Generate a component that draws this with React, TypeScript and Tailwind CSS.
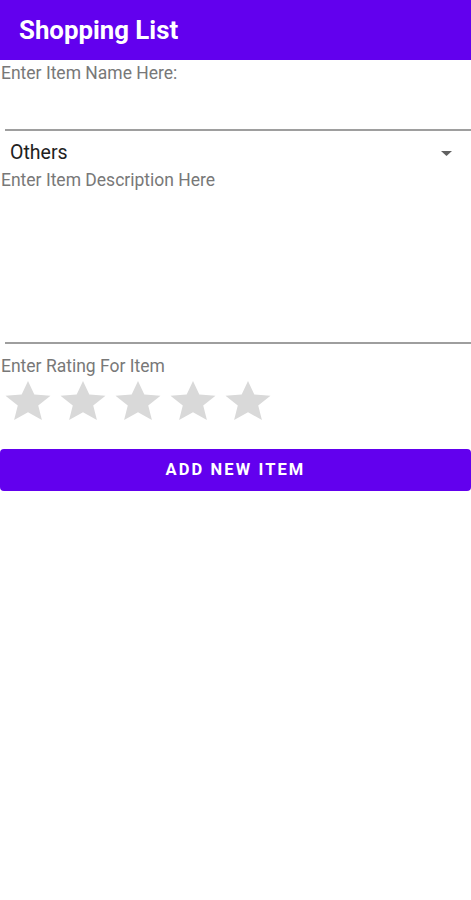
import React from "react";

const Star = () => (
  <svg width="54" height="49" viewBox="0 0 24 24" preserveAspectRatio="none" className="shrink-0">
    <path
      d="M12 17.27L18.18 21l-1.64-7.03L22 9.24l-7.19-.61L12 2 9.19 8.63 2 9.24l5.46 4.73L5.82 21z"
      fill="#d9d9d9"
    />
  </svg>
);

export default function App() {
  return (
    <div className="w-[471px] h-[900px] bg-white" style={{ fontFamily: "Roboto, 'Liberation Sans', sans-serif" }}>
      <div className="h-[60px] bg-[#6200ee] flex items-center pl-[19px]">
        <span className="text-white text-[25.8px] font-bold">Shopping List</span>
      </div>
      <div className="text-[17.5px] leading-[24px] text-[#787878] pl-[1px] pt-[1px]">Enter Item Name Here:</div>
      <div className="h-[44px]" />
      <div className="ml-[5px] h-[2px] bg-[#9e9e9e]" />
      <div className="flex items-center justify-between pl-[10px] pr-[19px] h-[37px] pt-[10px] pb-[3px]">
        <span className="text-[19.5px] leading-[24px] text-[#212121]">Others</span>
        <svg width="11" height="5" viewBox="0 0 11 5">
          <path d="M0 0h11L5.5 5z" fill="#616161" />
        </svg>
      </div>
      <div className="text-[17.5px] leading-[24px] text-[#787878] pl-[1px]">Enter Item Description Here</div>
      <div className="h-[150px]" />
      <div className="ml-[5px] h-[2px] bg-[#9e9e9e]" />
      <div className="text-[17.5px] leading-[22px] text-[#787878] pl-[1px] pt-[11px]">Enter Rating For Item</div>
      <div className="flex gap-[1px] pl-[1px]">
        <Star />
        <Star />
        <Star />
        <Star />
        <Star />
      </div>
      <div className="pt-[23px]">
        <button className="w-full h-[42px] rounded-[4px] bg-[#6200ee] text-white text-[16.5px] font-bold tracking-[2.1px] uppercase pt-[1px]">
          Add new item
        </button>
      </div>
    </div>
  );
}
